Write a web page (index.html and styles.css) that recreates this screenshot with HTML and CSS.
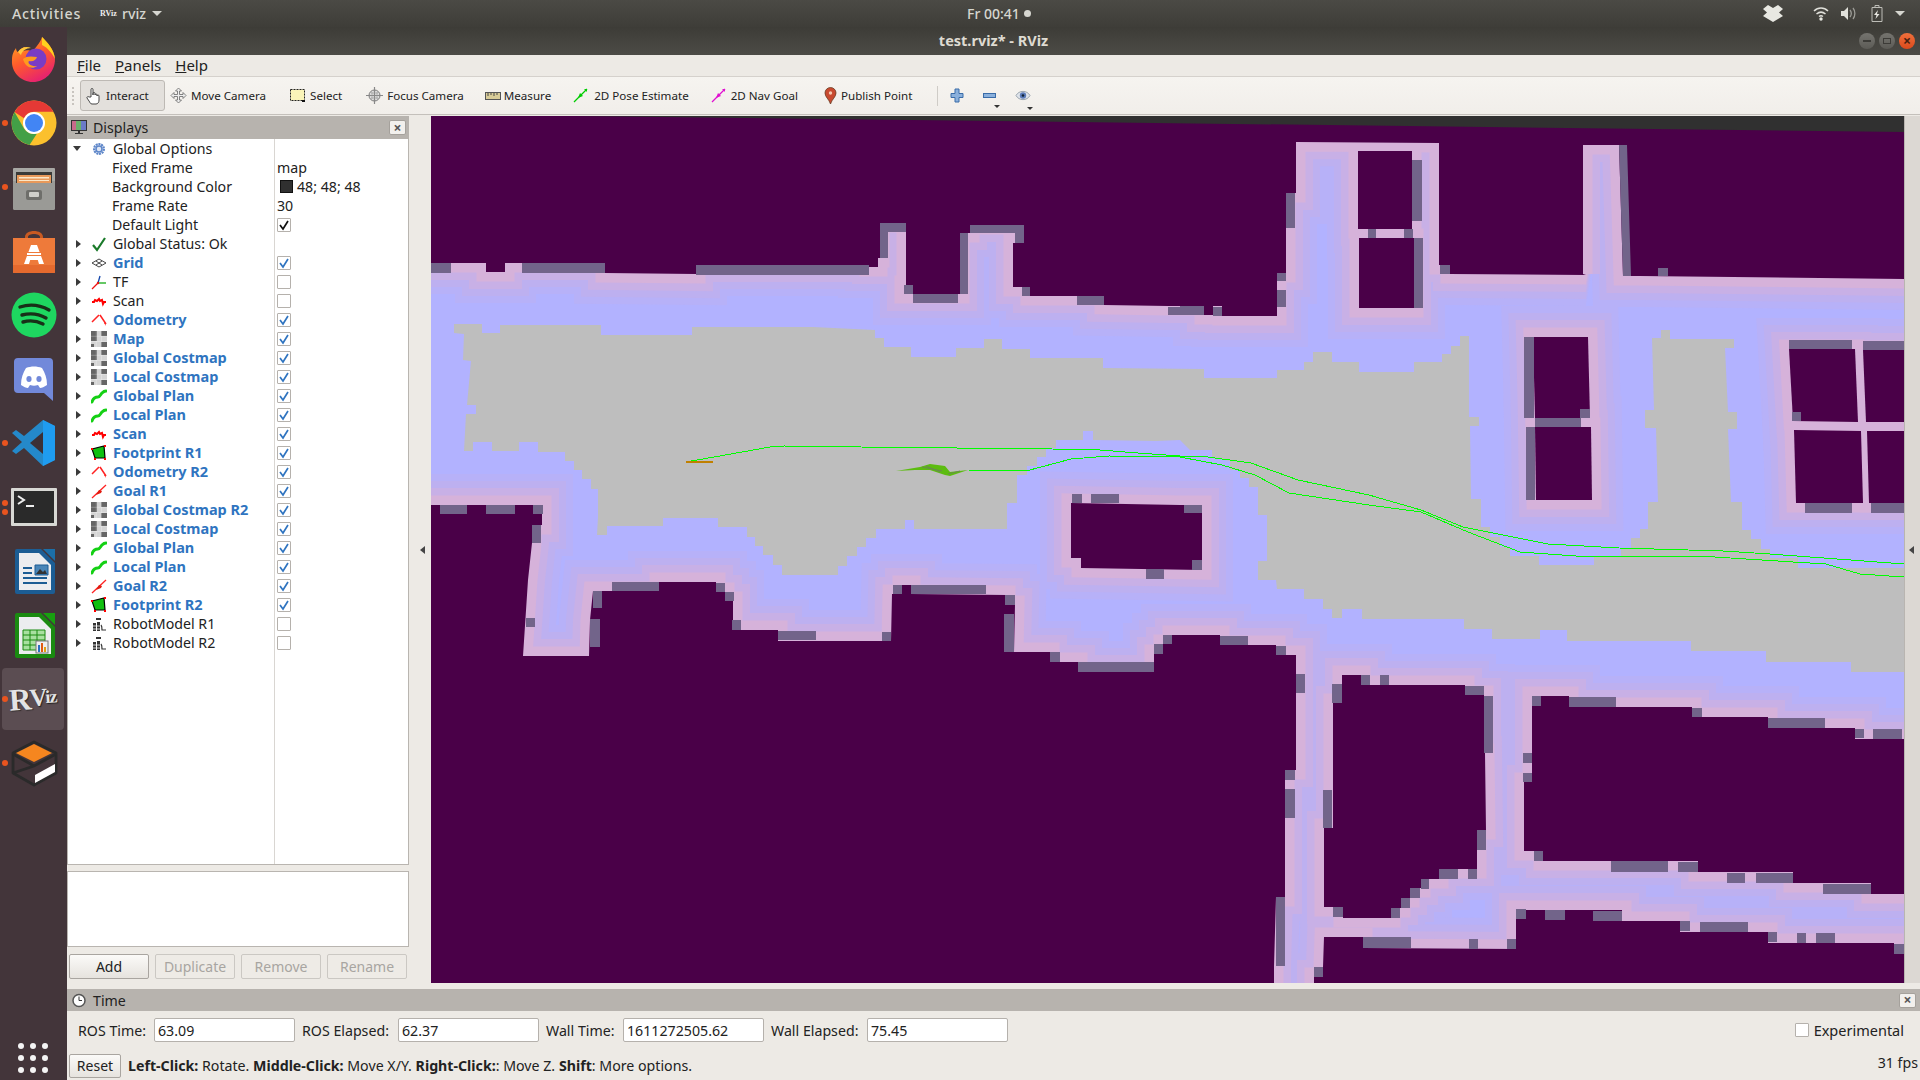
FILE: index.html
```html
<!DOCTYPE html>
<html lang="en">
<head>
  <meta charset="UTF-8">
  <title>test.rviz* - RViz</title>
  <link rel="stylesheet" href="styles.css">
</head>
<body>

  <!-- shared small icons for toolbar and tree -->
  <svg class="defs" width="0" height="0">
    <symbol id="i-map" viewBox="0 0 16 16">
      <rect x="0" y="0" width="16" height="16" fill="#d4d4d4"/>
      <path d="M0 0h6v10H0zM10 0h6v5h-6zM10 11h6v5h-6zM0 13h3v3H0z" fill="#666"/>
      <path d="M0 5.300h16M0 10.500h16M5.300 0v16M10.500 0v16" stroke="#fff" stroke-width=".4" opacity=".7"/>
    </symbol>
    <symbol id="i-plan" viewBox="0 0 16 16">
      <path d="M1 14c1-4 4-5 6-5s3-3 4-4 2-2 4-2" fill="none" stroke="#14d014" stroke-width="3" stroke-linecap="round"/>
    </symbol>
    <symbol id="i-scan" viewBox="0 0 16 16">
      <path d="M1 9h2l1-2 2 1 2-2 1 2 2-1 1 4 1-2h2" fill="none" stroke="#f00" stroke-width="2"/>
    </symbol>
    <symbol id="i-odom" viewBox="0 0 16 16">
      <path d="M1 10 8 3M9 3l6 9" fill="none" stroke="#f22" stroke-width="1.500"/>
      <path d="M13 11l2 3-1-4z" fill="#f22"/>
    </symbol>
    <symbol id="i-foot" viewBox="0 0 16 16">
      <path d="M1 4l12-3 1 12-10 0z" fill="#10c010" stroke="#000" stroke-width="1.200"/>
      <path d="M0 3h2v2h-2zM13 0h2v2h-2zM13 13h2v2h-2zM3 13h2v2h-2z" fill="#f00"/>
    </symbol>
    <symbol id="i-goal" viewBox="0 0 16 16">
      <path d="M1 15 15 2" stroke="#f22" stroke-width="1.300"/>
      <path d="M5 12l3-5 3 1-1 2z" fill="#e01c10"/>
    </symbol>
    <symbol id="i-robot" viewBox="0 0 16 16">
      <path d="M5 2h5v2h-5zM2 7h3v8h-3zM6 6h3v9h-3z" fill="#333"/>
      <path d="M10 9c1 1 1 4 1 5h4" fill="none" stroke="#333" stroke-width="1.200"/>
      <path d="M2 10h7M2 13h7" stroke="#fff" stroke-width=".8"/>
    </symbol>
    <symbol id="i-tick" viewBox="0 0 14 14">
      <path d="M3 7l3 4 5-8" fill="none" stroke="currentColor" stroke-width="1.700"/>
    </symbol>
  </svg>

  <div class="topbar">
    <span class="activities">Activities</span>
    <span class="app-name"><span class="app-logo">RViz</span>rviz<i class="tri"></i></span>
    <span class="clock">Fr 00:41 <i class="rec"></i></span>
    <div class="tray">
      <svg class="tray-drop" width="20" height="17" viewBox="0 0 20 17"><path d="M0 4l5-4 5 3 5-3 5 4-4 3.500 4 3.500-5 3-5 3-5-3-5-3 4-3.500z" fill="#e8e8e2"/></svg>
      <svg class="tray-wifi" width="16" height="15" viewBox="0 0 16 15"><path d="M1 5c4-4 10-4 14 0M3.500 8c3-2.500 6-2.500 9 0M6 10.500c1.400-1 2.600-1 4 0" fill="none" stroke="#e0e0da" stroke-width="1.500"/><circle cx="8" cy="13" r="1.700" fill="#e8e8e2"/></svg>
      <svg class="tray-vol" width="16" height="15" viewBox="0 0 16 15"><path d="M1 5h3l4-4v13l-4-4h-3z" fill="#e0e0da"/><path d="M10 4c1.500 2 1.500 5 0 7M13 2c2.500 3 2.500 8 0 11" fill="none" stroke="#9c9c96" stroke-width="1.300"/></svg>
      <svg class="tray-bat" width="12" height="17" viewBox="0 0 12 17"><path d="M1 2.500h10v14h-10zM4 .5h4v2h-4z" fill="none" stroke="#bdbdb7"/><path d="M7 5l-4 5h2.500l-1 4 4-5h-2.500z" fill="#e8e8e2"/></svg>
      <i class="tri"></i>
    </div>
  </div>

  <div class="desktop">
    <nav class="dock">
      <div class="dock-item">
        <svg width="48" height="48" viewBox="0 0 48 48">
          <defs>
            <linearGradient id="fx" x1="0" y1="0" x2=".5" y2="1"><stop offset="0" stop-color="#ffb01e"/><stop offset=".55" stop-color="#ff5a2c"/><stop offset="1" stop-color="#e8256c"/></linearGradient>
          </defs>
          <path d="M32 2c3 3 12 11 13 22 0 13-10 23-22 23S1 37 2 25c0-6 2-9 4-12 0 2 1 4 2 4 2-3 5-5 8-5-2 2-3 3-3 4 3-1 7-1 10 1 2-5 7-8 9-15z" fill="url(#fx)"/>
          <path d="M32 2c5 5 12 12 13 22-3-6-7-11-13-14z" fill="#ffd21e"/>
          <circle cx="26" cy="24" r="10.500" fill="#7a3cc4"/>
          <path d="M13 24c3-3 8-3 14-2-1 3-4 5-8 4-2 2 2 6 8 5-5 4-12 1-14-7z" fill="#ff9a1e"/>
          <path d="M8 17c3-5 9-6 13-4-5 0-9 3-10 7z" fill="#ffc83c"/>
        </svg>
      </div>
      <div class="dock-item running">
        <svg width="48" height="48" viewBox="0 0 48 48">
          <circle cx="24" cy="24" r="22.500" fill="#fbc02d"/>
          <path d="M24 1.500a22.500 22.500 0 0 1 19.500 11.300H24a11 11 0 0 0-10 6.500L4.500 13A22.500 22.500 0 0 1 24 1.500z" fill="#e53935"/>
          <path d="M4.500 13 14 29.500a11 11 0 0 0 13 5L19.500 46A22.500 22.500 0 0 1 4.500 13z" fill="#43a047"/>
          <circle cx="24" cy="24" r="11" fill="#fff"/>
          <circle cx="24" cy="24" r="9" fill="#4285f4"/>
        </svg>
      </div>
      <div class="dock-item running">
        <svg width="48" height="48" viewBox="0 0 48 48">
          <path d="M4 5h40a1 1 0 0 1 1 1v39a2 2 0 0 1-2 2H5a2 2 0 0 1-2-2V6a1 1 0 0 1 1-1z" fill="#a8a8a4"/>
          <path d="M3 18h42v27a2 2 0 0 1-2 2H5a2 2 0 0 1-2-2z" fill="#9a9a96"/>
          <path d="M6 9h36v11H6z" fill="#3a3a38"/>
          <path d="M7 12h34v8H7z" fill="#e8995a"/>
          <path d="M9 14h30v1.500H9zM9 17h30v1H9z" fill="#fbe7c8"/>
          <rect x="16" y="27" width="16" height="10" rx="2" fill="#6e6e6a"/>
          <rect x="19" y="29" width="10" height="5" rx="1" fill="#cfcfca"/>
        </svg>
      </div>
      <div class="dock-item">
        <svg width="48" height="48" viewBox="0 0 48 48">
          <path d="M15 10c0-8 18-8 18 0v4h-3v-4c0-4-12-4-12 0v4h-3z" fill="#c85a22"/>
          <path d="M3 11h42v34a1 1 0 0 1-1 1H4a1 1 0 0 1-1-1z" fill="#ee7a3a"/>
          <path d="M3 38h42v7a1 1 0 0 1-1 1H4a1 1 0 0 1-1-1z" fill="#e56a2e"/>
          <path d="M21 18h6l7 19h-5l-1.200-4h-7.600L19 37h-5z" fill="#fff"/>
          <path d="M15 25h18v4H15z" fill="#ee7a3a"/>
          <path d="M17 26h14v2H17z" fill="#fff"/>
        </svg>
      </div>
      <div class="dock-item">
        <svg width="48" height="48" viewBox="0 0 48 48">
          <circle cx="24" cy="24" r="22.500" fill="#1ed760"/>
          <path d="M10 16c9-3 20-2 29 3M12 24c8-2 17-1 24 3M13 31c7-2 14-1 20 2" fill="none" stroke="#183018" stroke-width="3.400" stroke-linecap="round"/>
        </svg>
      </div>
      <div class="dock-item">
        <svg width="48" height="48" viewBox="0 0 48 48">
          <path d="M8 3h31a4 4 0 0 1 4 4v39l-9-8H8a4 4 0 0 1-4-4V7a4 4 0 0 1 4-4z" fill="#7289da"/>
          <path d="M16 13c5-2 11-2 16 0 3 5 5 10 5 17-3 2-5 3-7 3l-2-3c-3 1-5 1-8 0l-2 3c-2 0-4-1-7-3 0-7 2-12 5-17z" fill="#fff"/>
          <ellipse cx="19" cy="24" rx="2.600" ry="3" fill="#7289da"/>
          <ellipse cx="29" cy="24" rx="2.600" ry="3" fill="#7289da"/>
        </svg>
      </div>
      <div class="dock-item running">
        <svg width="48" height="48" viewBox="0 0 48 48">
          <path d="M33 1 45 7v34l-12 6-19-18-8 6-4-3 10-9-10-9 4-3 8 6z" fill="#2489ca"/>
          <path d="M33 1 45 7v34l-12 6z" fill="#1f9cf0"/>
          <path d="M33 13 20 24l13 11z" fill="#3c3036"/>
        </svg>
      </div>
      <div class="dock-item running double">
        <svg width="48" height="48" viewBox="0 0 48 48">
          <rect x="1" y="5" width="46" height="38" rx="1" fill="#d8d8d4"/>
          <rect x="4" y="8" width="40" height="32" fill="#2a2a2a"/>
          <path d="M8 13l6 4-6 4" fill="none" stroke="#eee" stroke-width="2"/>
          <path d="M16 22h8v2h-8z" fill="#eee"/>
        </svg>
      </div>
      <div class="dock-item">
        <svg width="48" height="48" viewBox="0 0 48 48">
          <path d="M7 2h24l14 14v29a2 2 0 0 1-2 2H7a2 2 0 0 1-2-2V4a2 2 0 0 1 2-2z" fill="#1c5d94"/>
          <path d="M9 6h20l12 12v25H9z" fill="#ecedef"/>
          <path d="M33 2h12v12z" fill="#1c6fa8"/>
          <path d="M13 20h9v2h-9zM13 25h9v2h-9zM13 30h24v2H13zM13 35h24v2H13z" fill="#1c5d94"/>
          <path d="M25 18h13v10H25z" fill="#4a86b8" stroke="#1c5d94"/>
          <path d="M26 27l4-5 3 3 2-2 2 4z" fill="#333"/>
        </svg>
      </div>
      <div class="dock-item">
        <svg width="48" height="48" viewBox="0 0 48 48">
          <path d="M7 2h24l14 14v29a2 2 0 0 1-2 2H7a2 2 0 0 1-2-2V4a2 2 0 0 1 2-2z" fill="#1a8a10"/>
          <path d="M9 6h20l12 12v25H9z" fill="#ecedef"/>
          <path d="M33 2h12v12z" fill="#18a010"/>
          <path d="M13 19h22v20H13z" fill="#a8e0a0" stroke="#1a8a10"/>
          <path d="M13 24h22M13 29h22M13 34h22M20 19v20M27 19v20" stroke="#1a8a10"/>
          <rect x="26" y="30" width="12" height="12" fill="#eee" stroke="#777"/>
          <path d="M28 34h2v7h-2z" fill="#2a70c0"/><path d="M31 32h2v9h-2z" fill="#e05a10"/><path d="M34 36h2v5h-2z" fill="#e0a010"/>
        </svg>
      </div>
      <div class="dock-item running active">
        <span class="rviz-logo">R<span class="rv">V</span><span class="ri">iz</span></span>
      </div>
      <div class="dock-item running">
        <svg width="48" height="48" viewBox="0 0 48 48">
          <path d="M24 3 46 14v20L24 46 3 34V14z" fill="none" stroke="#2a2a2a" stroke-width="2.800" stroke-linejoin="round"/>
          <path d="M24 5 42 14 24 23 6 14z" fill="#f5861f"/>
          <path d="M3 15 24 27 46 15M24 27l-21 7" fill="none" stroke="#2a2a2a" stroke-width="2.800"/>
          <path d="M25 36 45 25v8L25 44z" fill="#fff"/>
        </svg>
      </div>
      <div class="dock-apps">
        <i></i><i></i><i></i><i></i><i></i><i></i><i></i><i></i><i></i>
      </div>
    </nav>

    <div class="window">
      <div class="titlebar">
        <span class="title">test.rviz* - RViz</span>
        <div class="win-btns">
          <span class="win-btn"><i class="w-min"></i></span>
          <span class="win-btn"><i class="w-max"></i></span>
          <span class="win-btn close">×</span>
        </div>
      </div>

      <div class="menubar">
        <span><u>F</u>ile</span>
        <span><u>P</u>anels</span>
        <span><u>H</u>elp</span>
      </div>

      <div class="toolbar">
        <i class="grip"></i>
        <div class="tool active">
          <svg width="17" height="18" viewBox="0 0 17 18"><path d="M5 10V2.500a1 1 0 0 1 2 0V8V6.500a1 1 0 0 1 2 0V8a1 1 0 0 1 2 0v1a1 1 0 0 1 2 0v4c0 2-1 4-3 4H6c-2 0-2-2-3-3l-2-3c-.5-1 1-2 2-1z" fill="#fff" stroke="#333" stroke-width=".9"/></svg>
          Interact
        </div>
        <div class="tool">
          <svg width="17" height="17" viewBox="0 0 17 17"><path d="M8.500 1l3 3h-2v3.500H13v-2l3 3-3 3v-2H9.500V13h2l-3 3-3-3h2V9.500H4v2l-3-3 3-3v2h3.500V4h-2z" fill="#eee" stroke="#666" stroke-width=".8"/></svg>
          Move Camera
        </div>
        <div class="tool">
          <svg width="16" height="15" viewBox="0 0 16 15"><rect x=".5" y="1.500" width="14" height="11" fill="#faf4b8" stroke="#222" stroke-dasharray="2 1"/><path d="M12 12h3v2h-3z" fill="#111"/></svg>
          Select
        </div>
        <div class="tool">
          <svg width="17" height="17" viewBox="0 0 17 17"><circle cx="8.500" cy="8.500" r="5.500" fill="#ddd" stroke="#777"/><path d="M8.500 0v17M0 8.500h17" stroke="#888" stroke-width="1.200"/><path d="M5 6h7M5 11h7M6 5v7M11 5v7" stroke="#999" stroke-width=".6"/></svg>
          Focus Camera
        </div>
        <div class="tool t-measure">
          <svg width="16" height="10" viewBox="0 0 16 10"><rect x=".5" y="1.500" width="15" height="7" fill="#d8cc98" stroke="#555"/><path d="M3 2v3M6 2v2M9 2v3M12 2v2" stroke="#444"/></svg>
          Measure
        </div>
        <div class="tool t-pose">
          <svg width="15" height="15" viewBox="0 0 15 15"><path d="M1 14 14 1" stroke="#0c0" stroke-width="1.300"/><path d="M5 10l2-5 3 3z" fill="#0c0"/><path d="M11 1h3v3z" fill="#0c0"/></svg>
          2D Pose Estimate
        </div>
        <div class="tool t-nav">
          <svg width="15" height="15" viewBox="0 0 15 15"><path d="M1 14 14 1" stroke="#e010d0" stroke-width="1.300"/><path d="M5 10l2-5 3 3z" fill="#e010d0"/><path d="M11 1h3v3z" fill="#e010d0"/></svg>
          2D Nav Goal
        </div>
        <div class="tool t-point">
          <svg width="13" height="18" viewBox="0 0 13 18"><path d="M6.500 17C5 12 1 10 1 6a5.500 5.500 0 0 1 11 0c0 4-4 6-5.500 11z" fill="#c84a30" stroke="#6a3a20" stroke-width=".8"/><circle cx="6.500" cy="6" r="1.700" fill="#f4c8b0"/></svg>
          Publish Point
        </div>
        <i class="sep"></i>
        <svg class="tool-ico first" width="14" height="15" viewBox="0 0 14 15"><path d="M5 1h4v4.500h4v4H9V14H5V9.500H1v-4h4z" fill="#8ab0dc" stroke="#3a6ca8"/></svg>
        <span class="tool-ico drop">
          <svg width="14" height="8" viewBox="0 0 14 8"><rect x=".5" y="1.500" width="12" height="4" fill="#8ab0dc" stroke="#3a6ca8"/></svg>
        </span>
        <span class="tool-ico drop">
          <svg width="16" height="13" viewBox="0 0 16 13"><path d="M1 6.500C4 1 12 1 15 6.500 12 12 4 12 1 6.500z" fill="#dfe4ea" stroke="#9aa4ae"/><circle cx="8" cy="6.500" r="3.200" fill="#5a7ab8"/><circle cx="8" cy="6.500" r="1.300" fill="#123"/></svg>
        </span>
      </div>

      <div class="main">
        <aside class="displays">
          <div class="dock-head">
            <svg width="16" height="15" viewBox="0 0 16 15"><rect x=".5" y=".5" width="15" height="10" fill="#7a8a6a" stroke="#333"/><path d="M1 1h4v9H1z" fill="#c86a8a"/><path d="M5 1h5v9H5z" fill="#6ab06a"/><path d="M10 1h5v9h-5z" fill="#6a7ac8"/><path d="M7 11h2v2H7zM4 13h8v1H4z" fill="#333"/></svg>
            <span>Displays</span>
            <b class="head-close">×</b>
          </div>

          <div class="tree">
            <div class="row"><i class="caret open"></i><svg class="ico" width="16" height="16" viewBox="0 0 16 16"><circle cx="8" cy="8" r="5" fill="#dfe6f4" stroke="#5c85c8" stroke-width="2" stroke-dasharray="2 .8"/><circle cx="8" cy="8" r="3" fill="none" stroke="#5c85c8" stroke-width="1.500"/></svg><span class="name">Global Options</span></div>
            <div class="row child"><span class="name">Fixed Frame</span><span class="val">map</span></div>
            <div class="row child"><span class="name">Background Color</span><span class="val"><i class="swatch"></i>48; 48; 48</span></div>
            <div class="row child"><span class="name">Frame Rate</span><span class="val">30</span></div>
            <div class="row child"><span class="name">Default Light</span><span class="val"><span class="chk"><svg width="14" height="14"><use href="#i-tick"/></svg></span></span></div>
            <div class="row"><i class="caret"></i><svg class="ico" width="16" height="16" viewBox="0 0 16 16"><path d="M2 9l4 5L14 2" fill="none" stroke="#1a7a2a" stroke-width="2.200"/></svg><span class="name">Global Status: Ok</span></div>
            <div class="row on"><i class="caret"></i><svg class="ico" width="16" height="16" viewBox="0 0 16 16"><path d="M1 8l7-4 7 4-7 4zM5 6l6 4M11 6l-6 4" fill="none" stroke="#444"/></svg><span class="name">Grid</span><span class="val"><span class="chk"><svg width="14" height="14"><use href="#i-tick"/></svg></span></span></div>
            <div class="row"><i class="caret"></i><svg class="ico" width="16" height="16" viewBox="0 0 16 16"><path d="M7 9 9 2" stroke="#14a" stroke-width="1.300"/><path d="M7 9h8" stroke="#1a1" stroke-width="1.300"/><path d="M7 9 1 15" stroke="#e11" stroke-width="1.300"/><circle cx="7" cy="9" r="1.200" fill="#e11"/></svg><span class="name">TF</span><span class="val"><span class="chk"></span></span></div>
            <div class="row"><i class="caret"></i><svg class="ico" width="16" height="16"><use href="#i-scan"/></svg><span class="name">Scan</span><span class="val"><span class="chk"></span></span></div>
            <div class="row on"><i class="caret"></i><svg class="ico" width="16" height="16"><use href="#i-odom"/></svg><span class="name">Odometry</span><span class="val"><span class="chk"><svg width="14" height="14"><use href="#i-tick"/></svg></span></span></div>
            <div class="row on"><i class="caret"></i><svg class="ico" width="16" height="16"><use href="#i-map"/></svg><span class="name">Map</span><span class="val"><span class="chk"><svg width="14" height="14"><use href="#i-tick"/></svg></span></span></div>
            <div class="row on"><i class="caret"></i><svg class="ico" width="16" height="16"><use href="#i-map"/></svg><span class="name">Global Costmap</span><span class="val"><span class="chk"><svg width="14" height="14"><use href="#i-tick"/></svg></span></span></div>
            <div class="row on"><i class="caret"></i><svg class="ico" width="16" height="16"><use href="#i-map"/></svg><span class="name">Local Costmap</span><span class="val"><span class="chk"><svg width="14" height="14"><use href="#i-tick"/></svg></span></span></div>
            <div class="row on"><i class="caret"></i><svg class="ico" width="16" height="16"><use href="#i-plan"/></svg><span class="name">Global Plan</span><span class="val"><span class="chk"><svg width="14" height="14"><use href="#i-tick"/></svg></span></span></div>
            <div class="row on"><i class="caret"></i><svg class="ico" width="16" height="16"><use href="#i-plan"/></svg><span class="name">Local Plan</span><span class="val"><span class="chk"><svg width="14" height="14"><use href="#i-tick"/></svg></span></span></div>
            <div class="row on"><i class="caret"></i><svg class="ico" width="16" height="16"><use href="#i-scan"/></svg><span class="name">Scan</span><span class="val"><span class="chk"><svg width="14" height="14"><use href="#i-tick"/></svg></span></span></div>
            <div class="row on"><i class="caret"></i><svg class="ico" width="16" height="16"><use href="#i-foot"/></svg><span class="name">Footprint R1</span><span class="val"><span class="chk"><svg width="14" height="14"><use href="#i-tick"/></svg></span></span></div>
            <div class="row on"><i class="caret"></i><svg class="ico" width="16" height="16"><use href="#i-odom"/></svg><span class="name">Odometry R2</span><span class="val"><span class="chk"><svg width="14" height="14"><use href="#i-tick"/></svg></span></span></div>
            <div class="row on"><i class="caret"></i><svg class="ico" width="16" height="16"><use href="#i-goal"/></svg><span class="name">Goal R1</span><span class="val"><span class="chk"><svg width="14" height="14"><use href="#i-tick"/></svg></span></span></div>
            <div class="row on"><i class="caret"></i><svg class="ico" width="16" height="16"><use href="#i-map"/></svg><span class="name">Global Costmap R2</span><span class="val"><span class="chk"><svg width="14" height="14"><use href="#i-tick"/></svg></span></span></div>
            <div class="row on"><i class="caret"></i><svg class="ico" width="16" height="16"><use href="#i-map"/></svg><span class="name">Local Costmap</span><span class="val"><span class="chk"><svg width="14" height="14"><use href="#i-tick"/></svg></span></span></div>
            <div class="row on"><i class="caret"></i><svg class="ico" width="16" height="16"><use href="#i-plan"/></svg><span class="name">Global Plan</span><span class="val"><span class="chk"><svg width="14" height="14"><use href="#i-tick"/></svg></span></span></div>
            <div class="row on"><i class="caret"></i><svg class="ico" width="16" height="16"><use href="#i-plan"/></svg><span class="name">Local Plan</span><span class="val"><span class="chk"><svg width="14" height="14"><use href="#i-tick"/></svg></span></span></div>
            <div class="row on"><i class="caret"></i><svg class="ico" width="16" height="16"><use href="#i-goal"/></svg><span class="name">Goal R2</span><span class="val"><span class="chk"><svg width="14" height="14"><use href="#i-tick"/></svg></span></span></div>
            <div class="row on"><i class="caret"></i><svg class="ico" width="16" height="16"><use href="#i-foot"/></svg><span class="name">Footprint R2</span><span class="val"><span class="chk"><svg width="14" height="14"><use href="#i-tick"/></svg></span></span></div>
            <div class="row"><i class="caret"></i><svg class="ico" width="16" height="16"><use href="#i-robot"/></svg><span class="name">RobotModel R1</span><span class="val"><span class="chk"></span></span></div>
            <div class="row"><i class="caret"></i><svg class="ico" width="16" height="16"><use href="#i-robot"/></svg><span class="name">RobotModel R2</span><span class="val"><span class="chk"></span></span></div>
          </div>

          <div class="desc"></div>

          <div class="tree-btns">
            <button>Add</button>
            <button disabled>Duplicate</button>
            <button disabled>Remove</button>
            <button disabled>Rename</button>
          </div>
        </aside>

        <div class="gutter"><i class="arrow"></i></div>

        <!-- 3D view: coordinates are screen pixels -->
        <svg class="view" width="1473" height="867" viewBox="431 116 1473 867">
          <defs>
            <g id="walls">
              <polygon points="431,116 1904,116 1904,279 1640,276 1623,276 1619,145 1583,145 1583,274 1586,275 1450,274 1450,265 1439,265 1439,143 1296,142 1296,193 1286,193 1286,273 1277,273 1277,316 1222,316 1222,306 1213,306 1213,315 1204,315 1204,306 1168,306 1104,305 1104,296 1030,296 1030,287 1013,287 1013,243 1024,243 1024,225 970,225 970,233 960,233 960,294 904,294 904,285 906,285 906,223 880,223 880,258 878,258 878,267 869,267 869,265 696,265 696,274 605,273 605,263 505,263 505,272 486,272 486,263 431,263"/>
              <polygon points="431,505 542,505 542,525 532,525 532,543 528,580 523,656 589,656 590,620 593,591 659,591 659,582 716,582 716,592 725,592 725,601 733,601 733,630 778,630 778,641 891,641 892,594 902,594 902,585 911,585 911,594 1006,595 1006,605 1015,605 1014,652 1050,652 1050,662 1078,662 1078,672 1154,672 1154,654 1163,654 1163,644 1172,644 1172,635 1220,635 1220,645 1276,645 1276,655 1296,655 1296,770 1285,770 1285,897 1276,897 1274,966 1274,983 431,983"/>
              <polygon points="1071,503 1180,505 1202,505 1202,570 1081,568 1081,558 1071,558"/>
              <polygon points="1358,151 1412,151 1412,229 1358,229"/>
              <polygon points="1359,238 1414,238 1414,308 1359,308"/>
              <polygon points="1533,337 1588,337 1590,418 1535,418"/>
              <polygon points="1535,427 1591,427 1592,500 1536,500"/>
              <polygon points="1789,349 1855,349 1858,422 1793,421"/>
              <polygon points="1863,350 1904,350 1904,422 1866,422"/>
              <polygon points="1794,430 1861,431 1863,503 1796,503"/>
              <polygon points="1867,431 1904,431 1904,503 1869,503"/>
              <polygon points="1342,675 1361,675 1361,685 1465,685 1465,695 1484,695 1484,753 1485,753 1486,830 1477,830 1477,869 1439,869 1439,879 1421,879 1421,888 1410,888 1410,898 1401,898 1401,908 1391,908 1391,918 1343,918 1343,907 1324,907 1324,828 1333,828 1333,703 1342,703"/>
              <polygon points="1532,696 1569,696 1569,707 1692,707 1692,717 1768,717 1768,728 1855,728 1855,739 1904,739 1904,894 1871,894 1871,883 1793,883 1793,872 1698,872 1698,861 1543,861 1543,851 1524,851 1524,782 1532,782"/>
              <polygon points="1324,937 1363,937 1363,948 1516,949 1516,910 1622,910 1622,921 1680,921 1680,932 1768,932 1768,943 1894,943 1894,954 1904,954 1904,983 1314,983 1314,977 1323,977 1323,967"/>
            </g>
          </defs>

          <rect class="m-free" x="431" y="116" width="1473" height="867"/>
          <use href="#walls" class="band b4"/>
          <use href="#walls" class="band b3"/>
          <use href="#walls" class="band b2"/>
          <use href="#walls" class="band b1"/>
          <polygon class="m-grey" points="454,324 482,324 482,333 500,333 500,325 601,325 601,335 692,335 692,327 813,327 875,330 875,338 884,338 884,347 911,347 911,357 956,357 956,348 984,348 984,339 1002,339 1002,349 1030,349 1030,358 1103,358 1103,368 1204,369 1204,378 1277,378 1277,370 1304,370 1304,362 1313,362 1313,352 1332,352 1332,362 1359,362 1359,372 1414,372 1414,362 1442,362 1442,354 1451,354 1451,346 1460,346 1460,336 1469,336 1469,417 1479,417 1479,426 1470,426 1471,499 1481,499 1481,527 1490,527 1490,537 1500,537 1500,547 1510,547 1510,556 1539,556 1539,565 1594,565 1594,556 1621,556 1621,548 1631,548 1631,538 1640,538 1640,529 1648,529 1648,502 1658,502 1656,428 1645,428 1645,410 1654,410 1652,338 1661,338 1661,330 1670,330 1670,339 1734,339 1734,348 1725,348 1728,412 1737,412 1737,429 1728,429 1731,502 1742,502 1742,530 1751,530 1751,539 1761,539 1761,549 1770,549 1770,558 1798,558 1798,568 1904,568 1904,672 1851,672 1851,662 1766,662 1766,651 1691,651 1691,641 1567,641 1567,630 1540,630 1540,639 1492,639 1492,629 1464,629 1464,619 1362,619 1362,609 1342,609 1342,618 1332,618 1332,609 1323,609 1323,599 1304,599 1304,589 1277,589 1276,580 1258,580 1258,561 1267,561 1267,515 1258,515 1258,487 1249,487 1249,478 1240,478 1240,470 1230,470 1230,461 1212,457 1212,450 1190,450 1180,440 1156,441 1093,440 1093,431 1083,431 1083,440 1056,440 1056,448 1046,448 1046,457 1037,457 1037,466 1027,466 1027,475 1017,475 1017,503 1007,503 1007,529 914,529 914,520 905,520 905,529 876,529 876,538 866,538 866,547 857,547 857,556 847,556 847,566 838,566 838,575 782,575 782,565 773,565 773,555 763,555 763,546 755,546 755,537 747,537 747,527 718,527 718,518 663,518 663,526 607,526 607,535 597,535 598,517 598,489 591,489 591,479 582,479 582,470 574,470 574,461 565,461 565,452 538,452 538,442 519,442 519,451 492,451 492,442 473,442 473,451 464,451 466,414 476,414 476,405 467,405 471,361 463,360 464,334 454,333"/>
          <use href="#walls" class="m-wall"/>

          <path class="m-cell" d="M431 263h20v10h-20zM522 263h83v10h-83zM696 265h173v10h-173zM880 223h26v9h-26zM880 232h8v26h-8zM904 285h9v9h-9zM913 294h45v9h-45zM960 233h8v61h-8zM970 225h54v8h-54zM1015 233h9v10h-9zM1022 287h8v9h-8zM1077 296h27v9h-27zM1168 307h12v8h-12zM1180 306h24v9h-24zM1213 307h9v9h-9zM1277 273h9v8h-9zM1277 290h9v17h-9zM1286 193h9v35h-9zM1440 265h10v9h-10zM1658 268h10v8h-10zM1619 145h8l4 131h-8z"/>
          <path class="m-cell" d="M1412 160h10v61h-10zM1414 238h9v70h-9zM1368 229h8v9h-8zM1404 229h9v9h-9zM1524 337h10v81h-10zM1526 427h9v73h-9zM1535 418h46v9h-46zM1580 409h10v9h-10zM1789 340h63v9h-63zM1863 341h41v9h-41zM1805 503h47v10h-47zM1871 503h33v10h-33zM1792 412h9v9h-9zM1072 494h10v9h-10zM1091 494h28v9h-28zM1184 505h18v8h-18zM1192 560h10v10h-10zM1146 569h18v10h-18z"/>
          <path class="m-cell" d="M440 505h27v9h-27zM486 505h29v9h-29zM533 505h10v9h-10zM532 525h9v18h-9zM526 618h9v9h-9zM612 582h47v9h-47zM593 591h9v17h-9zM590 619h10v28h-10zM716 583h9v9h-9zM725 592h9v9h-9zM732 620h9v10h-9zM778 631h38v9h-38zM882 632h9v9h-9zM893 585h9v9h-9zM911 585h75v9h-75zM1005 595h10v10h-10zM1004 614h10v38h-10zM1050 652h10v10h-10zM1078 662h76v10h-76zM1154 644h9v10h-9zM1163 635h9v9h-9zM1220 636h28v9h-28zM1276 646h10v9h-10zM1296 674h9v19h-9zM1285 770h10v10h-10zM1285 789h10v29h-10zM1276 897h9v69h-9z"/>
          <path class="m-cell" d="M1361 675h9v10h-9zM1380 675h9v10h-9zM1465 686h19v9h-19zM1484 696h9v57h-9zM1477 830h9v20h-9zM1468 869h9v10h-9zM1439 869h19v10h-19zM1421 879h8v10h-8zM1410 888h10v10h-10zM1401 898h9v10h-9zM1391 908h9v10h-9zM1333 907h10v10h-10zM1323 790h9v38h-9zM1332 684h10v19h-10zM1532 696h9v10h-9zM1569 697h47v10h-47zM1692 708h10v9h-10zM1768 718h57v10h-57zM1855 729h9v9h-9zM1873 729h29v10h-29zM1523 753h9v10h-9zM1523 773h9v9h-9zM1534 851h9v10h-9zM1611 861h57v11h-57zM1678 862h20v10h-20zM1727 873h18v10h-18zM1756 873h37v10h-37zM1823 884h48v10h-48z"/>
          <path class="m-cell" d="M1363 937h48v11h-48zM1469 939h9v10h-9zM1507 939h9v10h-9zM1516 909h10v10h-10zM1545 910h20v10h-20zM1593 911h29v10h-29zM1680 921h10v10h-10zM1700 922h48v10h-48zM1768 932h9v10h-9zM1797 933h9v10h-9zM1816 933h19v10h-19zM1894 944h10v10h-10zM1314 967h9v10h-9z"/>

          <polygon class="m-wedge" points="575,116 1904,116 1904,132"/>

          <polyline class="m-path" points="686,462 770,447 784,446 861,447 1052,449 1100,450 1138,453 1180,456 1208,457 1251,463 1298,480 1369,495 1421,510 1463,527 1548,544 1619,548 1723,551 1770,554 1904,564"/>
          <polyline class="m-path" points="968,470 1026,471 1071,459 1109,456 1180,457 1222,465 1255,475 1289,493 1369,505 1421,512 1468,532 1520,552 1576,556 1699,556 1793,562 1826,564 1860,574 1904,577"/>
          <polygon class="m-blob" points="896,471 920,467 930,464 945,466 950,472 968,470 950,476 945,475 930,470 915,470"/>
          <path class="m-fleck" d="M922 467l20 4M926 466l14 6M948 474l12-3"/>
          <path class="m-goal" d="M686 462h27"/>
        </svg>

        <div class="gutter-r"><i class="arrow right"></i></div>
      </div>

      <div class="split"></div>

      <div class="dock-head time-head">
        <svg width="14" height="15" viewBox="0 0 14 15"><circle cx="7" cy="7.500" r="6" fill="#fff" stroke="#555" stroke-width="1.500"/><path d="M7 3.500v4h3" fill="none" stroke="#333"/></svg>
        <span>Time</span>
        <b class="head-close">×</b>
      </div>

      <div class="time-row">
        <label>ROS Time:</label><span class="field">63.09</span>
        <label>ROS Elapsed:</label><span class="field">62.37</span>
        <label>Wall Time:</label><span class="field">1611272505.62</span>
        <label>Wall Elapsed:</label><span class="field">75.45</span>
        <span class="exp"><i class="chk"></i>Experimental</span>
      </div>

      <div class="status">
        <button class="reset">Reset</button>
        <span class="help"><b>Left-Click:</b> Rotate. <b>Middle-Click:</b> Move X/Y. <b>Right-Click:</b>: Move Z. <b>Shift</b>: More options.</span>
        <span class="fps">31 fps</span>
      </div>
    </div>
  </div>

</body>
</html>
```

FILE: styles.css
```css
* {
  box-sizing: border-box;
}
body {
  margin: 0;
  width: 1920px;
  height: 1080px;
  overflow: hidden;
  font-family: "Noto Sans", sans-serif;
  font-size: 14.200px;
  color: #222;
  background-color: #edeae5;
}
i {
  display: block;
  font-style: normal;
}
.defs {
  position: absolute;
}

/* top panel */
.topbar {
  height: 27px;
  display: flex;
  align-items: center;
  position: relative;
  background: linear-gradient(#4b4a45, #3e3d38);
  color: #d6d6d0;
  font-weight: 500;
}
.activities {
  margin-left: 12px;
  width: 88px;
  letter-spacing: .8px;
}
.app-name {
  display: flex;
  align-items: center;
}
.app-logo {
  width: 22px;
  font: bold 8px "Liberation Serif", serif;
  color: #eee;
}
.tri {
  width: 0;
  height: 0;
  margin-left: 6px;
  border-left: 5px solid transparent;
  border-right: 5px solid transparent;
  border-top: 5px solid #d6d6d0;
}
.clock {
  position: absolute;
  left: 967px;
  display: flex;
  align-items: center;
  gap: 1px;
  white-space: pre;
  font-size: 14px;
}
.rec {
  width: 7px;
  height: 7px;
  border-radius: 50%;
  background-color: #d6d6d0;
}
.tray {
  margin-left: auto;
  display: flex;
  align-items: center;
  padding-right: 15px;
}
.tray-drop { margin-right: 30px; }
.tray-wifi { margin-right: 11px; }
.tray-vol { margin-right: 15px; }
.tray-bat { margin-right: 6px; }

.desktop {
  height: 1053px;
  display: flex;
}

/* launcher */
.dock {
  width: 67px;
  flex: none;
  display: flex;
  flex-direction: column;
  background-color: #43353a;
}
.dock-item {
  height: 64px;
  flex: none;
  display: flex;
  align-items: center;
  justify-content: center;
  position: relative;
}
.dock-item.running::before {
  content: "";
  position: absolute;
  left: 2px;
  top: 29px;
  width: 6px;
  height: 6px;
  border-radius: 50%;
  background-color: #e9541f;
}
.dock-item.double::after {
  content: "";
  position: absolute;
  left: 2px;
  top: 34px;
  width: 6px;
  height: 6px;
  border-radius: 50%;
  background-color: #e9541f;
}
.dock-item.double::before {
  top: 25px;
}
.dock-item.active {
  background-color: #5b4d52;
  border-radius: 4px;
  margin: 1px 3px 1px 2px;
  height: 62px;
}
.dock-item.active::before {
  left: 0;
  top: 28px;
}
.rviz-logo {
  font: bold 31px "Liberation Serif", serif;
  letter-spacing: -2px;
  color: #e4e4e4;
  text-shadow: 1px 1px 1px #222;
  transform: rotate(-4deg);
}
.rv {
  font-size: 25px;
  vertical-align: 3px;
}
.ri {
  font-size: 18px;
  letter-spacing: -1px;
  vertical-align: 5px;
}
.dock-apps {
  margin-top: auto;
  margin-bottom: 7px;
  padding-left: 18px;
  display: grid;
  grid-template-columns: repeat(3, 6px);
  gap: 6px 6px;
}
.dock-apps i {
  width: 6px;
  height: 6px;
  border-radius: 50%;
  background-color: #f4f4f4;
}

/* window */
.window {
  flex: 1;
  display: flex;
  flex-direction: column;
  min-width: 0;
}
.titlebar {
  height: 28px;
  flex: none;
  display: flex;
  align-items: center;
  justify-content: center;
  position: relative;
  padding-bottom: 2px;
  background: linear-gradient(#3d3c37, #4c4b46);
  color: #dfdbd2;
  font-weight: bold;
  font-size: 14.500px;
}
.win-btns {
  position: absolute;
  right: 5px;
  top: 6px;
  display: flex;
  gap: 4px;
}
.win-btn {
  width: 16px;
  height: 16px;
  border-radius: 50%;
  display: flex;
  align-items: center;
  justify-content: center;
  background: linear-gradient(#75746f, #5c5b56);
}
.win-btn.close {
  background: linear-gradient(#f0703c, #dc4a1c);
  color: #4a2010;
  font-size: 14px;
  line-height: 16px;
}
.w-min {
  width: 8px;
  height: 2px;
  background-color: #3c3b37;
}
.w-max {
  width: 8px;
  height: 6px;
  border: 1px solid #3c3b37;
}

.menubar {
  height: 22px;
  flex: none;
  display: flex;
  align-items: center;
  padding-left: 10px;
  padding-bottom: 2px;
  gap: 14px;
  background-color: #edeae5;
  border-bottom: 1px solid #d5d1cc;
  font-size: 15px;
}
.toolbar {
  height: 38px;
  flex: none;
  display: flex;
  align-items: center;
  background: linear-gradient(#f6f4f0, #f1eeea);
  border-bottom: 1px solid #c4c0bb;
  font-size: 11.600px;
  padding-left: 5px;
}
.grip {
  width: 4px;
  height: 18px;
  margin-right: 4px;
  border-left: 2px dotted #c8c4bf;
}
.tool {
  display: flex;
  align-items: center;
  gap: 4px;
  padding: 0 12px;
  white-space: nowrap;
}
.tool.active {
  width: 85px;
  height: 31px;
  padding: 0 0 0 5px;
  margin-right: -7px;
  gap: 3px;
  background-color: #e3e0dc;
  border: 1px solid #bdb9b4;
  border-radius: 3px;
}
.t-measure {
  padding-left: 9px;
  gap: 3px;
}
.t-pose {
  padding-left: 10px;
  gap: 6px;
}
.t-nav {
  padding-left: 10px;
  gap: 5px;
}
.t-point {
  padding-left: 14px;
}
.sep {
  width: 1px;
  height: 20px;
  margin-left: 13px;
  background-color: #cfccc7;
}
.tool-ico {
  margin-left: 13px;
  width: 20px;
  display: flex;
  align-items: center;
  justify-content: center;
  position: relative;
}
.tool-ico.first {
  margin-left: 9px;
}
.tool-ico.drop::after {
  content: "";
  position: absolute;
  right: 0;
  bottom: -8px;
  border-left: 3px solid transparent;
  border-right: 3px solid transparent;
  border-top: 3px solid #333;
}

/* main area */
.main {
  height: 867px;
  flex: none;
  margin-top: 1px;
  display: flex;
}
.displays {
  width: 342px;
  flex: none;
  display: flex;
  flex-direction: column;
}
.dock-head {
  height: 23px;
  flex: none;
  display: flex;
  align-items: center;
  gap: 6px;
  padding: 0 3px 0 4px;
  background-color: #b7b3ae;
}
.head-close {
  margin-left: auto;
  width: 17px;
  height: 15px;
  display: flex;
  align-items: center;
  justify-content: center;
  background-color: #f2f0ed;
  border: 1px solid #a5a19c;
  border-radius: 2px;
  color: #555;
  font-size: 14px;
  line-height: 1;
}
.tree {
  height: 726px;
  flex: none;
  background: linear-gradient(to right, #fff 206px, #d9d6d2 206px, #d9d6d2 207px, #fff 207px);
  border: 1px solid #b9b5b0;
  border-top: none;
}
.row {
  height: 19px;
  display: flex;
  align-items: center;
  position: relative;
}
.caret {
  width: 0;
  height: 0;
  margin-left: 8px;
  margin-right: 7px;
  border-top: 4.500px solid transparent;
  border-bottom: 4.500px solid transparent;
  border-left: 5px solid #3a3a3a;
}
.caret.open {
  margin-left: 5px;
  margin-right: 7px;
  border-left: 4.500px solid transparent;
  border-right: 4.500px solid transparent;
  border-top: 5px solid #3a3a3a;
  border-bottom: none;
}
.ico {
  margin-left: 3px;
  margin-right: 6px;
  flex: none;
}
.row.child .name {
  margin-left: 44px;
}
.row.on {
  color: #2f74c0;
}
.row.on .name {
  font-weight: bold;
  font-size: 14.500px;
  margin-top: -2px;
}
.val {
  position: absolute;
  left: 209px;
  display: flex;
  align-items: center;
  color: #222;
}
.swatch {
  width: 13px;
  height: 13px;
  margin: 0 4px 0 3px;
  background-color: #303030;
  border: 1px solid #111;
}
.chk {
  width: 14px;
  height: 14px;
  display: block;
  background-color: #fff;
  border: 1px solid #b5b1ac;
  border-radius: 1px;
  color: #111;
}
.chk svg {
  display: block;
  margin: -1px;
}
.row.on .chk {
  color: #2f74c0;
}
.desc {
  height: 76px;
  flex: none;
  margin-top: 6px;
  background-color: #fff;
  border: 1px solid #b9b5b0;
}
.tree-btns {
  display: flex;
  gap: 6px;
  margin-top: 7px;
  padding-left: 2px;
}
button {
  width: 80px;
  height: 25px;
  padding: 0;
  font: 14px "Noto Sans", sans-serif;
  color: #222;
  background: linear-gradient(#fbfaf8, #e6e3de);
  border: 1px solid #a9a5a0;
  border-radius: 2px;
}
button:disabled {
  color: #a8a5a1;
  background: #eeebe6;
  border-color: #cbc8c3;
}

.gutter {
  width: 22px;
  flex: none;
  display: flex;
  align-items: center;
  padding-left: 11px;
}
.gutter-r {
  width: 16px;
  flex: none;
  display: flex;
  align-items: center;
  padding-left: 4px;
  background-color: #dcd8d3;
  border-left: 1px solid #b9b5b0;
}
.arrow {
  width: 0;
  height: 0;
  border-top: 4px solid transparent;
  border-bottom: 4px solid transparent;
  border-right: 5px solid #444;
}
.view {
  display: block;
  flex: none;
}
.m-free { fill: #b2b2ff; }
.m-grey { fill: #bebebe; }
.m-wall { fill: #4a0048; stroke: none; }
.m-cell { fill: #72648a; }
.m-wedge { fill: #303030; }
.band { fill: none; stroke-linejoin: miter; }
.b1 { stroke: #d6b2da; stroke-width: 19px; }
.b2 { stroke: #c8b0e6; stroke-width: 34px; }
.b3 { stroke: #bdb0f0; stroke-width: 48px; }
.b4 { stroke: #b7b1f8; stroke-width: 62px; }
.m-path { fill: none; stroke: #00ff00; stroke-width: 1px; shape-rendering: crispEdges; }
.m-blob { fill: #5cbc10; }
.m-fleck { fill: none; stroke: #6a8a50; stroke-width: 1px; }
.m-goal { stroke: #c08000; stroke-width: 2px; }

.split {
  height: 6px;
  flex: none;
}
.time-head {
  height: 22px;
  padding-left: 5px;
  padding-right: 4px;
  gap: 7px;
}
.time-row {
  height: 37px;
  flex: none;
  display: grid;
  grid-template-columns: 69px 141px 89px 141px 70px 141px 89px 141px 1fr;
  column-gap: 7px;
  align-items: center;
  padding-left: 11px;
  padding-right: 16px;
}
.field {
  height: 24px;
  display: flex;
  align-items: center;
  padding-left: 3px;
  padding-top: 1px;
  background-color: #fff;
  border: 1px solid #b5b1ac;
  border-radius: 2px;
}
.time-row label {
  white-space: nowrap;
  padding-top: 1px;
}
.exp {
  display: flex;
  align-items: center;
  justify-content: flex-end;
  gap: 5px;
  padding-top: 1px;
  font-size: 14.500px;
}
.status {
  display: flex;
  align-items: center;
  height: 32px;
  padding-left: 2px;
  padding-top: 3px;
}
.reset {
  width: 52px;
  height: 24px;
  flex: none;
  margin-right: 7px;
}
.help b {
  font-weight: bold;
}
.fps {
  margin-left: auto;
  margin-right: 2px;
  margin-bottom: 6px;
}
```
